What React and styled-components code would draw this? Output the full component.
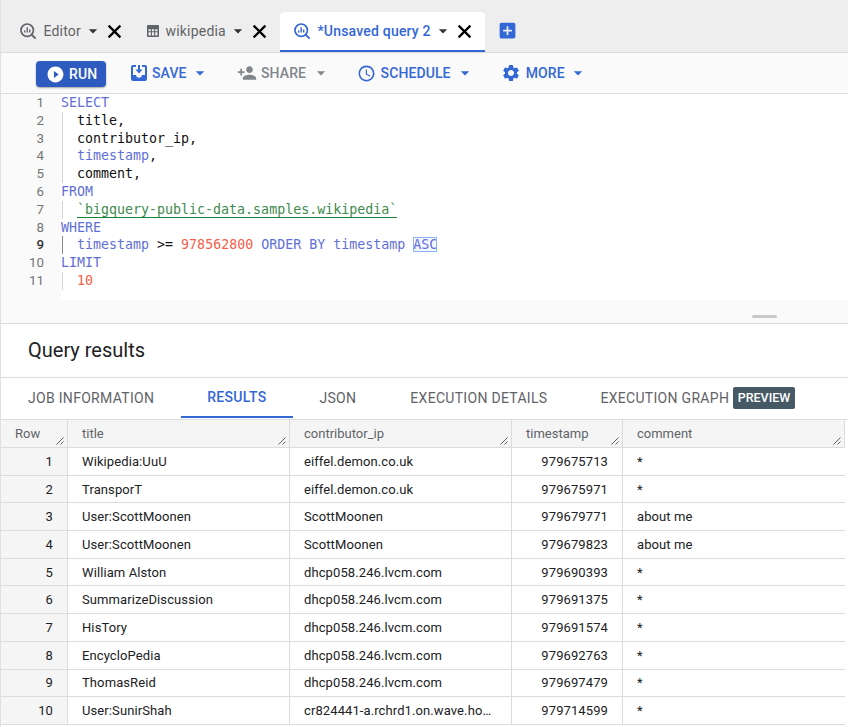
import React from 'react';
import styled, { createGlobalStyle } from 'styled-components';
import { MdPlayCircleFilled, MdPersonAdd, MdOutlineSchedule, MdSettings, MdArrowDropDown, MdAddBox } from 'react-icons/md';

const GlobalStyle = createGlobalStyle`
  html, body { margin: 0; padding: 0; background: #fff; }
  body { font-family: Roboto, "Liberation Sans", sans-serif; overflow: hidden; }
`;

const Page = styled.div`
  width: 848px;
  height: 727px;
  overflow: hidden;
  border-left: 1px solid #e0e0e0;
  box-sizing: border-box;
`;

const TabStrip = styled.div`
  height: 53px;
  box-sizing: border-box;
  background: #eee;
  border-bottom: 1px solid #dcdcdc;
  display: flex;
  align-items: flex-end;
  padding-left: 18px;
`;

const Tab = styled.div`
  height: 40px;
  box-sizing: border-box;
  display: flex;
  align-items: center;
  font-size: 14px;
  letter-spacing: 0.2px;
  color: ${p => (p.$active ? '#3367d6' : '#5f6368')};
  font-weight: ${p => (p.$active ? 500 : 400)};
  background: ${p => (p.$active ? '#fff' : 'transparent')};
  border-bottom: ${p => (p.$active ? '2px solid #3367d6' : '2px solid transparent')};
  border-radius: ${p => (p.$active ? '4px 4px 0 0' : '0')};
  padding: ${p => (p.$active ? '0 10px 0 13px' : '0')};
  margin-right: ${p => p.$gap}px;
  & > span { margin: 0 2px 0 6.5px; }
`;

const CloseMark = styled.svg`
  width: 21px;
  height: 21px;
  margin-left: 1px;
  fill: none;
  stroke: #000;
  stroke-width: 2.2;
`;

const AddTab = styled(MdAddBox)`
  color: #3367d6;
  margin: 0 0 11px 2px;
`;

const Toolbar = styled.div`
  height: 41px;
  box-sizing: border-box;
  background: #fafafa;
  border-bottom: 1px solid #dcdcdc;
  display: flex;
  align-items: center;
  padding-left: 35px;
`;

const RunButton = styled.div`
  width: 70px;
  height: 26px;
  box-sizing: border-box;
  padding-left: 9.5px;
  background: #2d5bbf;
  color: #fff;
  border-radius: 4px;
  display: flex;
  align-items: center;
  gap: 4.5px;
  font-size: 14px;
  font-weight: 500;
  letter-spacing: 0.1px;
  box-shadow: 0 1px 2px rgba(0, 0, 0, 0.35);
  margin: 2px 25px 0 0;
`;

const ToolButton = styled.div`
  display: flex;
  align-items: center;
  font-size: 14px;
  font-weight: 500;
  letter-spacing: 0.1px;
  color: ${p => (p.$disabled ? '#80868b' : '#3367d6')};
  margin-right: ${p => p.$gap}px;
  & > span { margin-left: ${p => p.$iconGap}px; }
  & > svg:last-child { margin-left: ${p => p.$caretGap}px; }
`;

const Editor = styled.div`
  height: 206px;
  display: flex;
  background: #fff;
`;

const Gutter = styled.div`
  width: 60px;
  background: #fafafa;
  box-sizing: border-box;
`;

const LineNo = styled.div`
  height: 17.8px;
  line-height: 17.8px;
  text-align: right;
  padding-right: 17px;
  font-size: 13.3px;
  color: ${p => (p.$current ? '#333' : '#757575')};
  font-weight: ${p => (p.$current ? 500 : 400)};
`;

const Code = styled.div`
  flex: 1;
  font-family: "DejaVu Sans Mono", "Liberation Mono", monospace;
  font-size: 13.3px;
`;

const CodeLine = styled.div`
  height: 17.8px;
  line-height: 17.8px;
  white-space: pre;
  color: #111;
  padding-left: ${p => (p.$indent ? '16px' : '0')};
  position: relative;
  &::before {
    content: ${p => (p.$indent ? '""' : 'none')};
    position: absolute;
    left: 1px;
    top: 0;
    bottom: 0;
    width: 1px;
    background: ${p => (p.$current ? '#8a8a8a' : '#d3d3d3')};
  }
`;

const Kw = styled.span`
  color: #5f6fd8;
`;

const Num = styled.span`
  color: #f6604a;
`;

const Str = styled.span`
  color: #3d8b4e;
  border-bottom: 1px solid #188038;
`;

const Match = styled.span`
  color: #5f6fd8;
  outline: 1px solid #8ab4f8;
  outline-offset: -1px;
  background: #f3f7fe;
`;

const Divider = styled.div`
  height: 24px;
  box-sizing: border-box;
  background: #fafafa;
  border-bottom: 1px solid #dcdcdc;
  display: flex;
  justify-content: flex-end;
  padding: 15px 71px 0 0;
`;

const Handle = styled.div`
  width: 25px;
  height: 3px;
  border-radius: 2px;
  background: #c8c8c8;
`;

const ResultsTitle = styled.div`
  height: 54px;
  box-sizing: border-box;
  border-bottom: 1px solid #dcdcdc;
  padding: 13px 0 0 27px;
  font-size: 20px;
  line-height: 26px;
  color: #202124;
`;

const ResultTabs = styled.div`
  height: 42px;
  box-sizing: border-box;
  display: flex;
  padding-left: 27px;
  border-bottom: 1px solid #dcdcdc;
  background: #fff;
`;

const ResultTab = styled.div`
  height: ${p => (p.$active ? '38px' : '40px')};
  display: flex;
  align-items: center;
  font-size: 14px;
  font-weight: ${p => (p.$active ? 500 : 400)};
  letter-spacing: 0.3px;
  color: ${p => (p.$active ? '#3367d6' : '#5f6368')};
  padding: ${p => (p.$active ? '0 27px 0 26px' : '0')};
  margin-right: ${p => p.$gap}px;
  border-bottom: ${p => (p.$active ? '2px solid #3367d6' : '0')};
`;

const PreviewBadge = styled.span`
  background: #455a64;
  color: #fff;
  border-radius: 2px;
  font-size: 12.5px;
  font-weight: 500;
  letter-spacing: 0;
  height: 22px;
  line-height: 22px;
  padding: 0 4.5px;
  margin-left: 4px;
`;

const Table = styled.table`
  width: 844px;
  margin-left: -1px;
  border-collapse: collapse;
  table-layout: fixed;
  font-size: 13px;
  color: #202124;
`;

const HeadCell = styled.th`
  height: 27px;
  padding: 0 0 0 14px;
  text-align: left;
  font-weight: 400;
  color: #5f6368;
  background: #f5f5f5;
  border: 1px solid #dcdcdc;
  border-top: 0;
  box-sizing: border-box;
  position: relative;
  vertical-align: top;
  line-height: 27px;
  & > svg {
    position: absolute;
    right: 3px;
    bottom: 2px;
  }
`;

const Cell = styled.td`
  height: 27.7px;
  padding: 0 ${p => (p.$right ? '14px' : '18px')} 0 14px;
  box-sizing: border-box;
  border: 1px solid #dcdcdc;
  text-align: ${p => (p.$right ? 'right' : 'left')};
  background: ${p => (p.$index ? '#f5f5f5' : '#fff')};
  letter-spacing: 0.1px;
  white-space: nowrap;
  overflow: hidden;
  text-overflow: ellipsis;
  &:last-child { border-right: 0; }
`;

const CloseIcon = () => (
  <CloseMark viewBox="0 0 21 21">
    <path d="M4.6 4.6 L16.4 16.4 M16.4 4.6 L4.6 16.4" />
  </CloseMark>
);

const ResizeGrip = () => (
  <svg width="8" height="8" viewBox="0 0 8 8" fill="none" stroke="#5f6368" strokeWidth="1">
    <path d="M0.5 7.5 L7.5 0.5 M4.5 7.5 L7.5 4.5" />
  </svg>
);

const AnalyticsIcon = ({ color }) => (
  <svg width="18" height="18" viewBox="0 0 18 18" fill="none" stroke={color} strokeWidth="1.7">
    <circle cx="8.2" cy="8.2" r="6.2" />
    <path d="M12.6 12.6 L16.6 16.6" strokeWidth="2" />
    <path d="M5.7 8.5 V10.5 M8.2 5.2 V10.5 M10.7 7.5 V10.5" strokeWidth="1.4" />
  </svg>
);

const TableIcon = () => (
  <svg width="12" height="12" viewBox="0 0 12 12">
    <rect width="12" height="12" rx="1" fill="#5f6368" />
    <path d="M1.5 4.2h2.3v2H1.5zM4.9 4.2h2.2v2H4.9zM8.2 4.2h2.3v2H8.2zM1.5 7.3h2.3v3.2H1.5zM4.9 7.3h2.2v3.2H4.9zM8.2 7.3h2.3v3.2H8.2z" fill="#eee" />
  </svg>
);

const SaveIcon = () => (
  <svg width="16" height="16" viewBox="0 0 16 16" fill="#3367d6">
    <path d="M2 0h3v2H2v8h3.2a2.8 2.8 0 0 0 5.6 0H14V2h-3V0h3a2 2 0 0 1 2 2v12a2 2 0 0 1-2 2H2a2 2 0 0 1-2-2V2a2 2 0 0 1 2-2z" />
    <path d="M7 0h2v4.5h2.5L8 8.5l-3.5-4H7z" />
  </svg>
);

const code = [
  <CodeLine key="1"><Kw>SELECT</Kw></CodeLine>,
  <CodeLine key="2" $indent>title,</CodeLine>,
  <CodeLine key="3" $indent>contributor_ip,</CodeLine>,
  <CodeLine key="4" $indent><Kw>timestamp</Kw>,</CodeLine>,
  <CodeLine key="5" $indent>comment,</CodeLine>,
  <CodeLine key="6"><Kw>FROM</Kw></CodeLine>,
  <CodeLine key="7" $indent><Str>`bigquery-public-data.samples.wikipedia`</Str></CodeLine>,
  <CodeLine key="8"><Kw>WHERE</Kw></CodeLine>,
  <CodeLine key="9" $indent $current><Kw>timestamp</Kw> {'>='} <Num>978562800</Num> <Kw>ORDER BY</Kw> <Kw>timestamp</Kw> <Match>ASC</Match></CodeLine>,
  <CodeLine key="10"><Kw>LIMIT</Kw></CodeLine>,
  <CodeLine key="11" $indent><Num>10</Num></CodeLine>,
];

const rows = [
  ['Wikipedia:UuU', 'eiffel.demon.co.uk', '979675713', '*'],
  ['TransporT', 'eiffel.demon.co.uk', '979675971', '*'],
  ['User:ScottMoonen', 'ScottMoonen', '979679771', 'about me'],
  ['User:ScottMoonen', 'ScottMoonen', '979679823', 'about me'],
  ['William Alston', 'dhcp058.246.lvcm.com', '979690393', '*'],
  ['SummarizeDiscussion', 'dhcp058.246.lvcm.com', '979691375', '*'],
  ['HisTory', 'dhcp058.246.lvcm.com', '979691574', '*'],
  ['EncycloPedia', 'dhcp058.246.lvcm.com', '979692763', '*'],
  ['ThomasReid', 'dhcp058.246.lvcm.com', '979697479', '*'],
  ['User:SunirShah', 'cr824441-a.rchrd1.on.wave.home.com', '979714599', '*'],
];

const columns = [
  ['Row', 67],
  ['title', 222],
  ['contributor_ip', 222],
  ['timestamp', 111],
  ['comment', 222],
];

const App = () => (
  <Page>
    <GlobalStyle />
    <TabStrip>
      <Tab $gap={22}>
        <AnalyticsIcon color="#5f6368" /><span>Editor</span><MdArrowDropDown size={20} color="#333" /><CloseIcon />
      </Tab>
      <Tab $gap={10}>
        <TableIcon /><span>wikipedia</span><MdArrowDropDown size={20} color="#333" /><CloseIcon />
      </Tab>
      <Tab $active $gap={10}>
        <AnalyticsIcon color="#3367d6" /><span>*Unsaved query 2</span><MdArrowDropDown size={20} color="#333" /><CloseIcon />
      </Tab>
      <AddTab size={21} />
    </TabStrip>
    <Toolbar>
      <RunButton><MdPlayCircleFilled size={19} />RUN</RunButton>
      <ToolButton $gap={27} $iconGap={5} $caretGap={3.5}><SaveIcon /><span>SAVE</span><MdArrowDropDown size={20} /></ToolButton>
      <ToolButton $disabled $gap={26} $iconGap={4} $caretGap={5}><MdPersonAdd size={20} /><span>SHARE</span><MdArrowDropDown size={20} /></ToolButton>
      <ToolButton $gap={26} $iconGap={4.5} $caretGap={4}><MdOutlineSchedule size={19} /><span>SCHEDULE</span><MdArrowDropDown size={20} /></ToolButton>
      <ToolButton $gap={0} $iconGap={5} $caretGap={3}><MdSettings size={20} /><span>MORE</span><MdArrowDropDown size={20} /></ToolButton>
    </Toolbar>
    <Editor>
      <Gutter>
        {code.map((_, i) => <LineNo key={i} $current={i === 8}>{i + 1}</LineNo>)}
      </Gutter>
      <Code>{code}</Code>
    </Editor>
    <Divider><Handle /></Divider>
    <ResultsTitle>Query results</ResultsTitle>
    <ResultTabs>
      <ResultTab $gap={27}>JOB INFORMATION</ResultTab>
      <ResultTab $active $gap={26}>RESULTS</ResultTab>
      <ResultTab $gap={54}>JSON</ResultTab>
      <ResultTab $gap={53}>EXECUTION DETAILS</ResultTab>
      <ResultTab $gap={0}>EXECUTION GRAPH<PreviewBadge>PREVIEW</PreviewBadge></ResultTab>
    </ResultTabs>
    <Table>
      <colgroup>
        {columns.map(([name, w]) => <col key={name} width={w} />)}
      </colgroup>
      <thead>
        <tr>
          {columns.map(([name]) => <HeadCell key={name}>{name}<ResizeGrip /></HeadCell>)}
        </tr>
      </thead>
      <tbody>
        {rows.map((r, i) => (
          <tr key={i}>
            <Cell $right $index>{i + 1}</Cell>
            <Cell>{r[0]}</Cell>
            <Cell>{r[1]}</Cell>
            <Cell $right>{r[2]}</Cell>
            <Cell>{r[3]}</Cell>
          </tr>
        ))}
      </tbody>
    </Table>
  </Page>
);

export default App;
